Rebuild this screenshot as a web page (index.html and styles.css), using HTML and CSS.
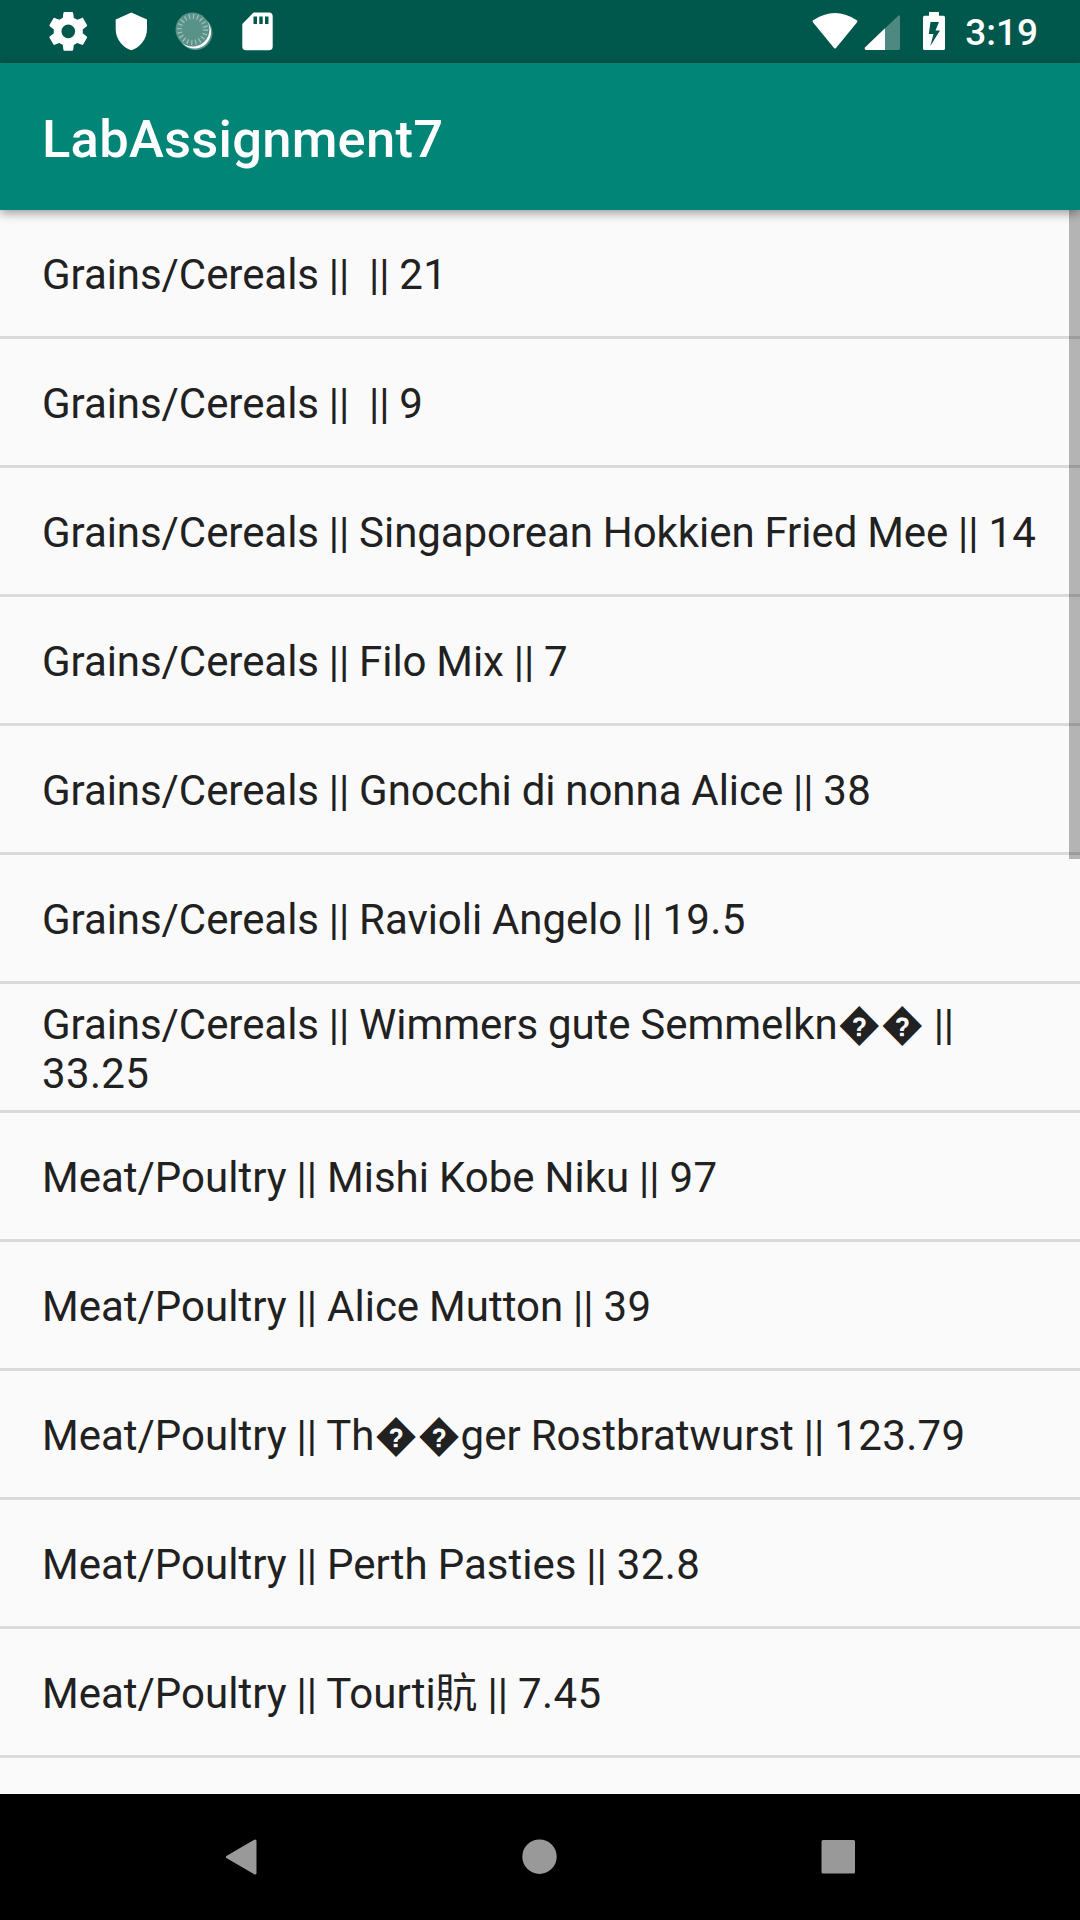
FILE: index.html
```html
<!DOCTYPE html>
<html lang="en">
<head>
<meta charset="utf-8">
<title>LabAssignment7</title>
<link rel="stylesheet" href="styles.css">
</head>
<body>
<div class="screen">
  <header class="status">
    <svg width="290" height="63" viewBox="0 0 290 63" fill="#fff">
      <g transform="translate(45 8.1) scale(1.94)"><path d="M19.43 12.98c.04-.32.07-.64.07-.98s-.03-.66-.07-.98l2.11-1.65c.19-.15.24-.42.12-.64l-2-3.46c-.12-.22-.39-.3-.61-.22l-2.49 1c-.52-.4-1.08-.73-1.69-.98l-.38-2.65C14.46 2.18 14.25 2 14 2h-4c-.25 0-.46.18-.49.42l-.38 2.65c-.61.25-1.17.59-1.69.98l-2.49-1c-.23-.09-.49 0-.61.22l-2 3.46c-.13.22-.07.49.12.64l2.11 1.65c-.04.32-.07.65-.07.98s.03.66.07.98l-2.11 1.65c-.19.15-.24.42-.12.64l2 3.46c.12.22.39.3.61.22l2.49-1c.52.4 1.08.73 1.69.98l.38 2.65c.03.24.24.42.49.42h4c.25 0 .46-.18.49-.42l.38-2.65c.61-.25 1.17-.59 1.69-.98l2.49 1c.23.09.49 0 .61-.22l2-3.46c.12-.22.07-.49-.12-.64zM12 15.5a3.5 3.5 0 1 1 0-7 3.5 3.5 0 0 1 0 7z"/></g>
      <path d="M131.3 12.5L147 19.5V29C147 39 140 47.5 131.3 50.3C122.500 47.500 115.700 39 115.700 29V19.500Z"/>
      <circle cx="195.500" cy="33" r="17" opacity=".35"/>
      <circle cx="194.500" cy="32" r="16.500"/>
      <circle cx="192.500" cy="29.500" r="17" fill="#599289"/>
      <circle cx="192.500" cy="29.500" r="13" fill="none" stroke="#9cc0ba" stroke-width="5" stroke-dasharray="1.300 2.784"/>
      <path fill-rule="evenodd" d="M253.500 12.500H269Q272.700 12.500 272.700 16.500V46.500Q272.700 50.300 269 50.300H246Q242.300 50.300 242.300 46.500V24ZM253.500 16.500V24H257V16.500ZM259.300 16.500V24H262.700V16.500ZM265 16.500V24H268.500V16.500Z"/>
    </svg>
    <div class="status-end">
      <svg width="146" height="63" viewBox="0 0 146 63" fill="#fff">
        <path d="M2.700 20.500Q25 5.500 47.300 20.500V22L26 48Q25 49.200 24 48L2.700 22Z"/>
        <path d="M55 47.500L87.500 16.500Q90 14 90 17V48.500Q90 50 88 50H56.500Q54 49.500 55 47.500Z" opacity=".3"/>
        <path d="M75 28.300V50H56.500Q54 49.500 55 47.500Z"/>
        <path fill-rule="evenodd" d="M119 12H129V15.700H133.500Q135 15.700 135 17.500V48.500Q135 50 133.500 50H114.500Q113 50 113 48.500V17.500Q113 15.700 114.500 15.700H119ZM120.500 22L118.800 34H123.500L120.300 46L130 30.500H125.500L129 22Z"/>
      </svg>
      <span class="clock">3:19</span>
    </div>
  </header>
  <h1 class="appbar">LabAssignment7</h1>
  <main class="list">
    <div class="row grains">Grains/Cereals ||  || <span class="price">21</span></div>
    <div class="row grains">Grains/Cereals ||  || <span class="price">9</span></div>
    <div class="row grains">Grains/Cereals || Singaporean Hokkien Fried Mee || <span class="price">14</span></div>
    <div class="row grains">Grains/Cereals || Filo Mix || <span class="price">7</span></div>
    <div class="row grains">Grains/Cereals || Gnocchi di nonna Alice || <span class="price">38</span></div>
    <div class="row grains">Grains/Cereals || Ravioli Angelo || <span class="price">19.5</span></div>
    <div class="row grains">Grains/Cereals || Wimmers gute Semmelkn�� || <span class="price">33.25</span></div>
    <div class="row">Meat/Poultry || Mishi Kobe Niku || <span class="price">97</span></div>
    <div class="row">Meat/Poultry || Alice Mutton || <span class="price">39</span></div>
    <div class="row">Meat/Poultry || Th��ger Rostbratwurst || <span class="price">123.79</span></div>
    <div class="row">Meat/Poultry || Perth Pasties || <span class="price">32.8</span></div>
    <div class="row">Meat/Poultry || Tourti貥 || <span class="price">7.45</span></div>
    <div class="scrollbar"></div>
  </main>
  <nav class="nav">
    <svg width="1080" height="126" viewBox="0 0 1080 126" fill="#999" stroke="#999" stroke-width="3" stroke-linejoin="round"><path d="M227.500 63L255 47V79Z"/><circle cx="539.500" cy="62.700" r="15.700"/><rect x="823" y="47.500" width="30.500" height="30.500"/></svg>
  </nav>
</div>
</body>
</html>
```
FILE: styles.css
```css
body {
  margin: 0;
  font-family: Roboto, "Noto Sans CJK SC", sans-serif;
}

.screen {
  width: 1080px;
  height: 1920px;
  display: flex;
  flex-direction: column;
  background: #fafafa;
  overflow: hidden;
}

.status {
  height: 63px;
  flex: none;
  background: #00574b;
  display: flex;
  justify-content: space-between;
}

.status-end {
  display: flex;
  gap: 9px;
  padding-right: 42px;
}

.clock {
  color: #fff;
  font-size: 37px;
  font-weight: 500;
  line-height: 66px;
}

.appbar {
  margin: 0;
  height: 147px;
  flex: none;
  box-sizing: border-box;
  padding-left: 42px;
  background: #008577;
  color: #fff;
  font-size: 52.5px;
  font-weight: 500;
  letter-spacing: .25px;
  line-height: 152px;
  box-shadow: 0 3px 10px rgba(0, 0, 0, .4);
  z-index: 1;
}

.list {
  flex: 1;
  position: relative;
  overflow: hidden;
}

.row {
  height: 129px;
  box-sizing: border-box;
  padding: 3px 38px 0 42px;
  border-bottom: 3px solid #dadada;
  display: block;
  font-size: 42px;
  line-height: 49px;
  word-spacing: -.45px;
  color: #212121;
  white-space: pre-wrap;
  align-content: center;
}

.grains {
  letter-spacing: -.06px;
}

.price {
  letter-spacing: .35px;
}

.scrollbar {
  position: absolute;
  right: 0;
  top: 0;
  width: 11px;
  height: 649px;
  background: rgba(0, 0, 0, .28);
}

.nav {
  height: 126px;
  flex: none;
  background: #000;
}
```
